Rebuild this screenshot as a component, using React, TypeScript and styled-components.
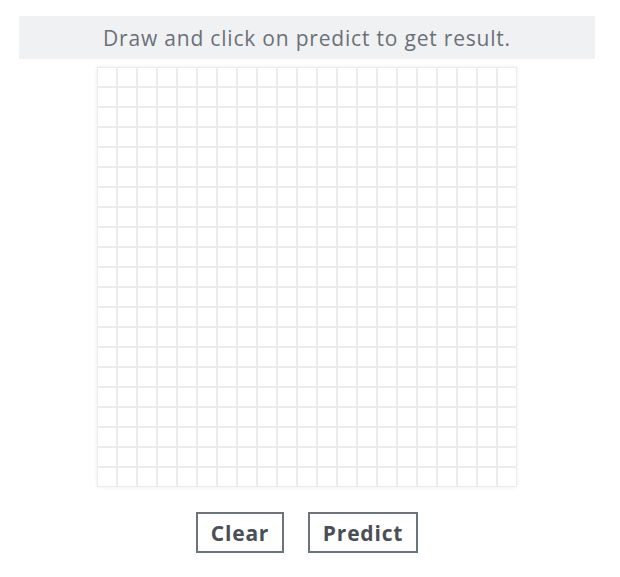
import React from "react";
import styled, { createGlobalStyle } from "styled-components";

const Global = createGlobalStyle`
  html, body { margin: 0; padding: 0; background: #ffffff; }
  body { font-family: "Open Sans", "Noto Sans", sans-serif; }
  * { box-sizing: border-box; }
`;

const Page = styled.div`
  width: 576px;
  margin: 16px 0 0 19px;
  display: flex;
  flex-direction: column;
  align-items: center;
`;

const Banner = styled.div`
  width: 100%;
  height: 43px;
  background: #f0f1f3;
  color: #6b7078;
  font-family: "Open Sans", sans-serif;
  font-size: 21px;
  letter-spacing: 0.8px;
  display: flex;
  align-items: center;
  justify-content: center;
`;

const Board = styled.div`
  margin-top: 8px;
  display: grid;
  grid-template-columns: repeat(21, 20px);
  grid-template-rows: repeat(21, 20px);
  box-shadow: 0 0 4px rgba(0, 0, 0, 0.08);
`;

const Cell = styled.div`
  border: 1px solid #ececec;
  background: #ffffff;
`;

const Actions = styled.div`
  margin-top: 25px;
  display: flex;
  gap: 24px;
`;

const Button = styled.button<{ $w: number }>`
  width: ${(p) => p.$w}px;
  height: 41px;
  border: 2px solid #6c737b;
  background: #ffffff;
  color: #4a4f55;
  font-family: "Open Sans", sans-serif;
  font-weight: 700;
  font-size: 21px;
  letter-spacing: 0.8px;
  padding: 0;
  cursor: pointer;
`;

export default function App() {
  const cells = Array.from({ length: 21 * 21 });
  return (
    <>
      <Global />
      <Page>
        <Banner>Draw and click on predict to get result.</Banner>
        <Board>
          {cells.map((_, i) => (
            <Cell key={i} />
          ))}
        </Board>
        <Actions>
          <Button $w={88}>Clear</Button>
          <Button $w={110}>Predict</Button>
        </Actions>
      </Page>
    </>
  );
}
